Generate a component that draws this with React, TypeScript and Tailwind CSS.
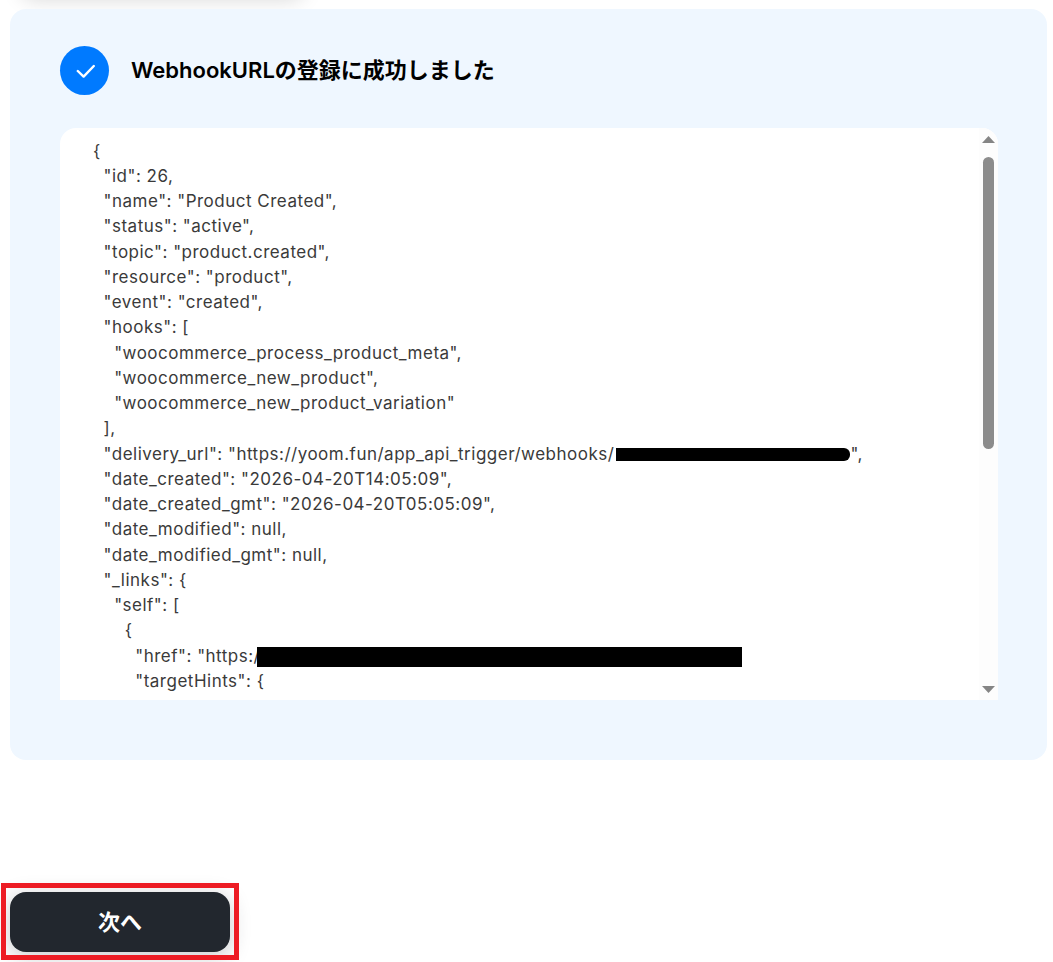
const font = "font-['Inter','Noto_Sans_CJK_JP',sans-serif]"

const lines: React.ReactNode[] = [
  "{",
  '  "id": 26,',
  '  "name": "Product Created",',
  '  "status": "active",',
  '  "topic": "product.created",',
  '  "resource": "product",',
  '  "event": "created",',
  '  "hooks": [',
  '    "woocommerce_process_product_meta",',
  '    "woocommerce_new_product",',
  '    "woocommerce_new_product_variation"',
  "  ],",
  <>
    {'  "delivery_url": "https://yoom.fun/app_api_trigger/webhooks/'}
    <span className="inline-block ml-[2px] w-[234px] h-[13px] bg-black rounded-r-[6px] align-[-1px]"></span>
    {'",'}
  </>,
  '  "date_created": "2026-04-20T14:05:09",',
  '  "date_created_gmt": "2026-04-20T05:05:09",',
  '  "date_modified": null,',
  '  "date_modified_gmt": null,',
  '  "_links": {',
  '    "self": [',
  "      {",
  <>
    {'        "href": "https:/'}
    <span className="inline-block -ml-[3px] w-[485px] h-[20px] bg-black align-[-5px]"></span>
  </>,
  '        "targetHints": {',
]

export default function App() {
  return (
    <div className={`relative w-[1053px] h-[962px] bg-white overflow-hidden ${font}`}>
      {/* Bottom edge of the card above, mostly scrolled away */}
      <div className="absolute left-[20px] top-[-40px] w-[285px] h-[40px] rounded-[16px] bg-white shadow-[0_0_20px_rgba(0,0,0,0.15)]"></div>

      <div className="pt-[9px] pl-[10px] pr-[6px]">
        <div className="relative h-[751px] rounded-[16px] bg-[#eff7ff] pt-[37px] px-[50px] pr-[49px]">
          <div className="flex items-center gap-[22px]">
            <div className="w-[49px] h-[49px] rounded-full bg-[#007aff] flex items-center justify-center">
              <svg width="20" height="16" viewBox="0 0 20 16" fill="none">
                <path d="M2.8 8 L8.6 13.6 L18.8 3" stroke="white" strokeWidth="2.4" strokeLinecap="round" strokeLinejoin="round" />
              </svg>
            </div>
            <div className="text-[22px] leading-[28px] pb-[2px] font-semibold text-black">WebhookURLの登録に成功しました</div>
          </div>

          <div className="mt-[33px] h-[572px] flex rounded-t-[16px] bg-white overflow-hidden">
            <pre className={`flex-1 overflow-hidden pt-[10.5px] pl-[33px] text-[17px] leading-[25.25px] tracking-[0.5px] text-[#3a3a3a] ${font}`}>
              {lines.map((line, i) => (
                <div key={i} className="h-[25.25px]">{line}</div>
              ))}
            </pre>

            {/* Scrollbar */}
            <div className="w-[19px] shrink-0 bg-[#fdfdfd] flex flex-col items-center pt-[8px] pb-[7px]">
              <svg width="13" height="7" viewBox="0 0 13 7" className="shrink-0">
                <path d="M6.5 0 L13 7 L0 7 Z" fill="#858585" />
              </svg>
              <div className="mt-[14px] w-[11px] h-[292px] rounded-full bg-[#8c8c8c]"></div>
              <div className="flex-1"></div>
              <svg width="13" height="7" viewBox="0 0 13 7" className="shrink-0">
                <path d="M0 0 L13 0 L6.5 7 Z" fill="#858585" />
              </svg>
            </div>
          </div>
        </div>

        <button className="mt-[132px] w-[220px] h-[60px] rounded-[16px] bg-[#22272e] text-white text-[22px] font-bold flex items-center justify-center shadow-[0_4px_20px_rgba(34,39,46,0.25)]">
          次へ
        </button>
      </div>

      {/* Red highlight around the button */}
      <div className="absolute left-[1px] top-[883px] w-[238px] h-[77px] border-[5px] border-[#ed1c24]"></div>
    </div>
  )
}
